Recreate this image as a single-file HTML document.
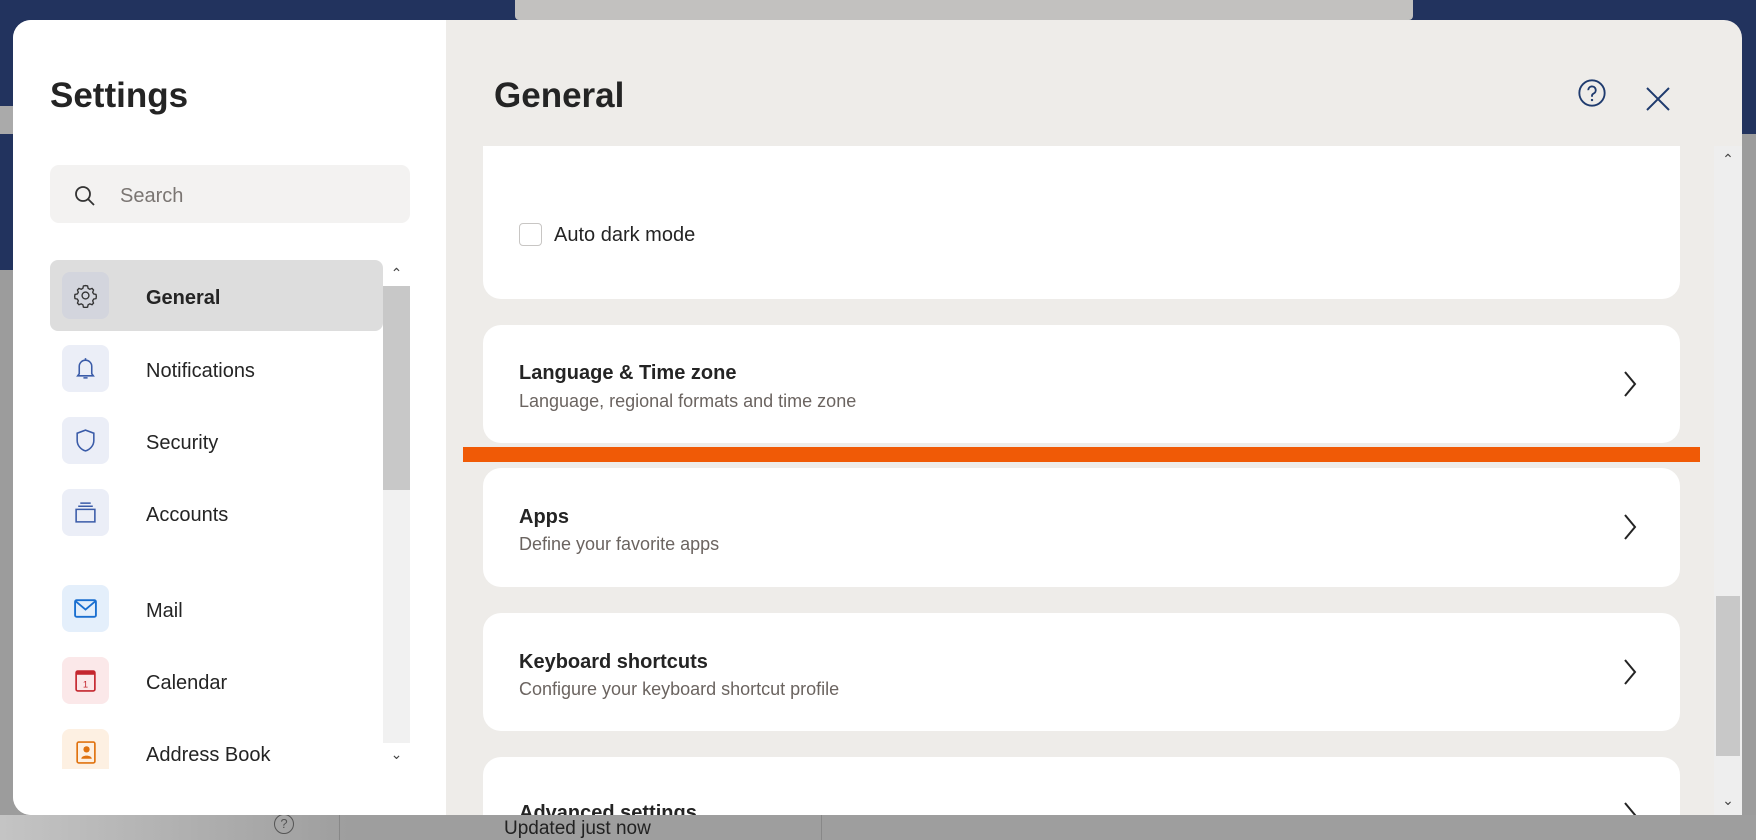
<!DOCTYPE html>
<html><head><meta charset="utf-8"><style>
*{box-sizing:border-box;margin:0;padding:0}
body{width:1756px;height:840px;overflow:hidden;position:relative;background:#9c9c9c;font-family:"Liberation Sans",sans-serif;color:#242424}
.abs{position:absolute}
.card{position:absolute;left:483px;width:1197px;background:#fff;border-radius:18px}
.ct{position:absolute;left:36px;font-size:20px;font-weight:bold;color:#242424}
.cs{position:absolute;left:36px;font-size:18px;color:#6b6460}
.chev{position:absolute;left:1140px}
.nav{position:absolute;left:50px;width:333px;height:71px}
.ib{position:absolute;left:12px;top:12px;width:47px;height:47px;border-radius:8px;background:#ebeef7}
.ib svg{position:absolute;left:11px;top:11px}
.nl{position:absolute;left:96px;top:27px;font-size:20px;color:#242424}
</style></head><body>
<div class="abs" style="left:0;top:0;width:1756px;height:134px;background:#22335e"></div>
<div class="abs" style="left:0;top:106px;width:13px;height:28px;background:#aaa"></div>
<div class="abs" style="left:0;top:134px;width:13px;height:136px;background:#22335e"></div>
<div class="abs" style="left:515px;top:0;width:898px;height:20px;background:#c2c1bf;border-radius:0 0 4px 4px"></div>
<div class="abs" style="left:0;top:815px;width:1756px;height:25px;background:linear-gradient(90deg,#c4c4c4,#9e9e9e 20%,#9e9e9e)"></div>
<div class="abs" style="left:339px;top:815px;width:1px;height:25px;background:#888"></div>
<div class="abs" style="left:821px;top:815px;width:1px;height:25px;background:#888"></div>
<div class="abs" style="left:274px;top:814px;width:20px;height:20px;border:1.5px solid #555;border-radius:50%;font-size:13px;text-align:center;line-height:17px;color:#555">?</div>
<div class="abs" style="left:504px;top:818px;font-size:19px;color:#222">Updated just now</div>

<div class="abs" style="left:13px;top:20px;width:1729px;height:795px;border-radius:18px;overflow:hidden;background:#eeece9">
  <div class="abs" style="left:0;top:0;width:433px;height:795px;background:#fff"></div>
  <div class="abs" style="left:37px;top:56px;font-size:35px;font-weight:bold">Settings</div>
  <div class="abs" style="left:481px;top:56px;font-size:35px;font-weight:bold">General</div>
  <svg class="abs" style="left:1564px;top:58px" width="30" height="30" viewBox="0 0 32 32"><circle cx="16" cy="16" r="13.5" fill="none" stroke="#1f3b6e" stroke-width="2"/><path d="M12 13a4 4 0 1 1 5.5 3.7c-1 .5-1.5 1.2-1.5 2.3v1" fill="none" stroke="#1f3b6e" stroke-width="2"/><circle cx="16" cy="23.5" r="1.3" fill="#1f3b6e"/></svg>
  <svg class="abs" style="left:1632px;top:66px" width="26" height="26" viewBox="0 0 26 26"><path d="M2 2L24 24M24 2L2 24" stroke="#1f3b6e" stroke-width="2"/></svg>
  <div class="abs" style="left:37px;top:145px;width:360px;height:58px;background:#f3f2f1;border-radius:9px"></div>
  <svg class="abs" style="left:60px;top:164px" width="24" height="24" viewBox="0 0 24 24"><circle cx="10" cy="10" r="7" fill="none" stroke="#333" stroke-width="1.8"/><path d="M15 15l6 6" stroke="#333" stroke-width="1.8"/></svg>
  <div class="abs" style="left:107px;top:165px;font-size:20px;color:#7a7572">Search</div>
</div>

<div class="nav" style="top:260px;background:#dddddd;border-radius:8px"><div class="ib" style="background:#d3d5dd"><svg width="25" height="25" viewBox="0 0 24 24"><path d="M12 2.5l2 .3.5 2.3 1.6.9 2.2-.8 1.4 1.5-.8 2.2.9 1.6 2.3.5.3 2-.3 2-2.3.5-.9 1.6.8 2.2-1.4 1.5-2.2-.8-1.6.9-.5 2.3-2 .3-2-.3-.5-2.3-1.6-.9-2.2.8-1.4-1.5.8-2.2-.9-1.6-2.3-.5-.3-2 .3-2 2.3-.5.9-1.6-.8-2.2 1.4-1.5 2.2.8 1.6-.9.5-2.3z" fill="none" stroke="#333" stroke-width="1.3"/><circle cx="12" cy="12" r="3.3" fill="none" stroke="#333" stroke-width="1.3"/></svg></div><div class="nl" style="font-weight:bold">General</div></div>
<div class="nav" style="top:333px"><div class="ib"><svg width="25" height="25" viewBox="0 0 24 24"><path d="M6 17V10a6 6 0 0 1 12 0v7l1.5 2h-15z M12 2v2 M10 21h4" fill="none" stroke="#3a5ba8" stroke-width="1.5"/></svg></div><div class="nl">Notifications</div></div>
<div class="nav" style="top:405px"><div class="ib"><svg width="25" height="25" viewBox="0 0 24 24"><path d="M12 2l8 3v7c0 5-4 9-8 10-4-1-8-5-8-10V5z" fill="none" stroke="#3a5ba8" stroke-width="1.5"/></svg></div><div class="nl">Security</div></div>
<div class="nav" style="top:477px"><div class="ib"><svg width="25" height="25" viewBox="0 0 24 24"><path d="M3 9h18v12H3z M5 6h14 M7 3h10" fill="none" stroke="#3a5ba8" stroke-width="1.5"/></svg></div><div class="nl">Accounts</div></div>
<div class="nav" style="top:573px"><div class="ib" style="background:#e4effb"><svg width="25" height="25" viewBox="0 0 24 24"><rect x="2" y="4" width="20" height="16" rx="1.5" fill="none" stroke="#1a6fd0" stroke-width="1.8"/><path d="M2.5 5l9.5 8 9.5-8" fill="none" stroke="#1a6fd0" stroke-width="1.8"/></svg></div><div class="nl">Mail</div></div>
<div class="nav" style="top:645px"><div class="ib" style="background:#fbe8e9"><svg width="25" height="25" viewBox="0 0 24 24"><rect x="3" y="3" width="18" height="19" rx="1.5" fill="none" stroke="#c4262e" stroke-width="1.6"/><rect x="3" y="3" width="18" height="3.5" fill="#c4262e"/><text x="12" y="18.5" font-size="9" text-anchor="middle" fill="#c4262e" font-family="Liberation Sans">1</text></svg></div><div class="nl">Calendar</div></div>
<div class="abs" style="left:50px;top:717px;width:333px;height:52px;overflow:hidden"><div class="ib" style="background:#fdf0e2"><svg width="25" height="25" viewBox="0 0 24 24"><rect x="4" y="2" width="17" height="20" rx="1.5" fill="none" stroke="#e0720f" stroke-width="1.6"/><circle cx="13" cy="9" r="3" fill="#e0720f"/><path d="M8 18c0-4 10-4 10 0z" fill="#e0720f"/></svg></div><div class="nl">Address Book</div></div>
<div class="abs" style="left:383px;top:260px;width:27px;height:509px;background:#f1f1f1"></div>
<div class="abs" style="left:383px;top:286px;width:27px;height:204px;background:#c8c8c8"></div>
<div class="abs" style="left:383px;top:260px;width:27px;height:26px;background:#fff;font-size:14px;text-align:center;line-height:26px;color:#444">&#8963;</div>
<div class="abs" style="left:383px;top:743px;width:27px;height:26px;background:#fff;font-size:14px;text-align:center;line-height:22px;color:#444">&#8964;</div>

<div class="abs" style="left:446px;top:146px;width:1268px;height:669px;overflow:hidden">
  <div class="card" style="left:37px;top:-40px;height:193px;border-radius:0 0 18px 18px">
    <div class="abs" style="left:36px;top:117px;width:23px;height:23px;border:1.5px solid #c8c6c4;border-radius:4px"></div>
    <div class="abs" style="left:71px;top:118px;font-size:20px">Auto dark mode</div>
  </div>
  <div class="card" style="left:37px;top:179px;height:118px">
    <div class="ct" style="top:37px">Language &amp; Time zone</div>
    <div class="cs" style="top:66px">Language, regional formats and time zone</div>
    <svg class="chev" style="top:46px" width="14" height="26" viewBox="0 0 14 26"><path d="M2 1l10 12L2 25" fill="none" stroke="#242424" stroke-width="2"/></svg>
  </div>
  <div class="card" style="left:37px;top:322px;height:119px">
    <div class="ct" style="top:38px">Apps</div>
    <div class="cs" style="top:66px">Define your favorite apps</div>
    <svg class="chev" style="top:46px" width="14" height="26" viewBox="0 0 14 26"><path d="M2 1l10 12L2 25" fill="none" stroke="#242424" stroke-width="2"/></svg>
  </div>
  <div class="card" style="left:37px;top:467px;height:118px">
    <div class="ct" style="top:38px">Keyboard shortcuts</div>
    <div class="cs" style="top:66px">Configure your keyboard shortcut profile</div>
    <svg class="chev" style="top:46px" width="14" height="26" viewBox="0 0 14 26"><path d="M2 1l10 12L2 25" fill="none" stroke="#242424" stroke-width="2"/></svg>
  </div>
  <div class="card" style="left:37px;top:611px;height:118px">
    <div class="ct" style="top:45px">Advanced settings</div>
    <svg class="chev" style="top:45px" width="14" height="26" viewBox="0 0 14 26"><path d="M2 1l10 12L2 25" fill="none" stroke="#242424" stroke-width="2"/></svg>
  </div>
</div>
<div class="abs" style="left:1714px;top:146px;width:28px;height:669px;background:#eeeeee"></div>
<div class="abs" style="left:1716px;top:596px;width:24px;height:160px;background:#c8c8c8"></div>
<div class="abs" style="left:1714px;top:146px;width:28px;height:26px;font-size:14px;text-align:center;line-height:26px;color:#444">&#8963;</div>
<div class="abs" style="left:1714px;top:790px;width:28px;height:24px;font-size:14px;text-align:center;line-height:20px;color:#444">&#8964;</div>
<div class="abs" style="left:463px;top:447px;width:1237px;height:15px;background:#f05a06"></div>
</body></html>
